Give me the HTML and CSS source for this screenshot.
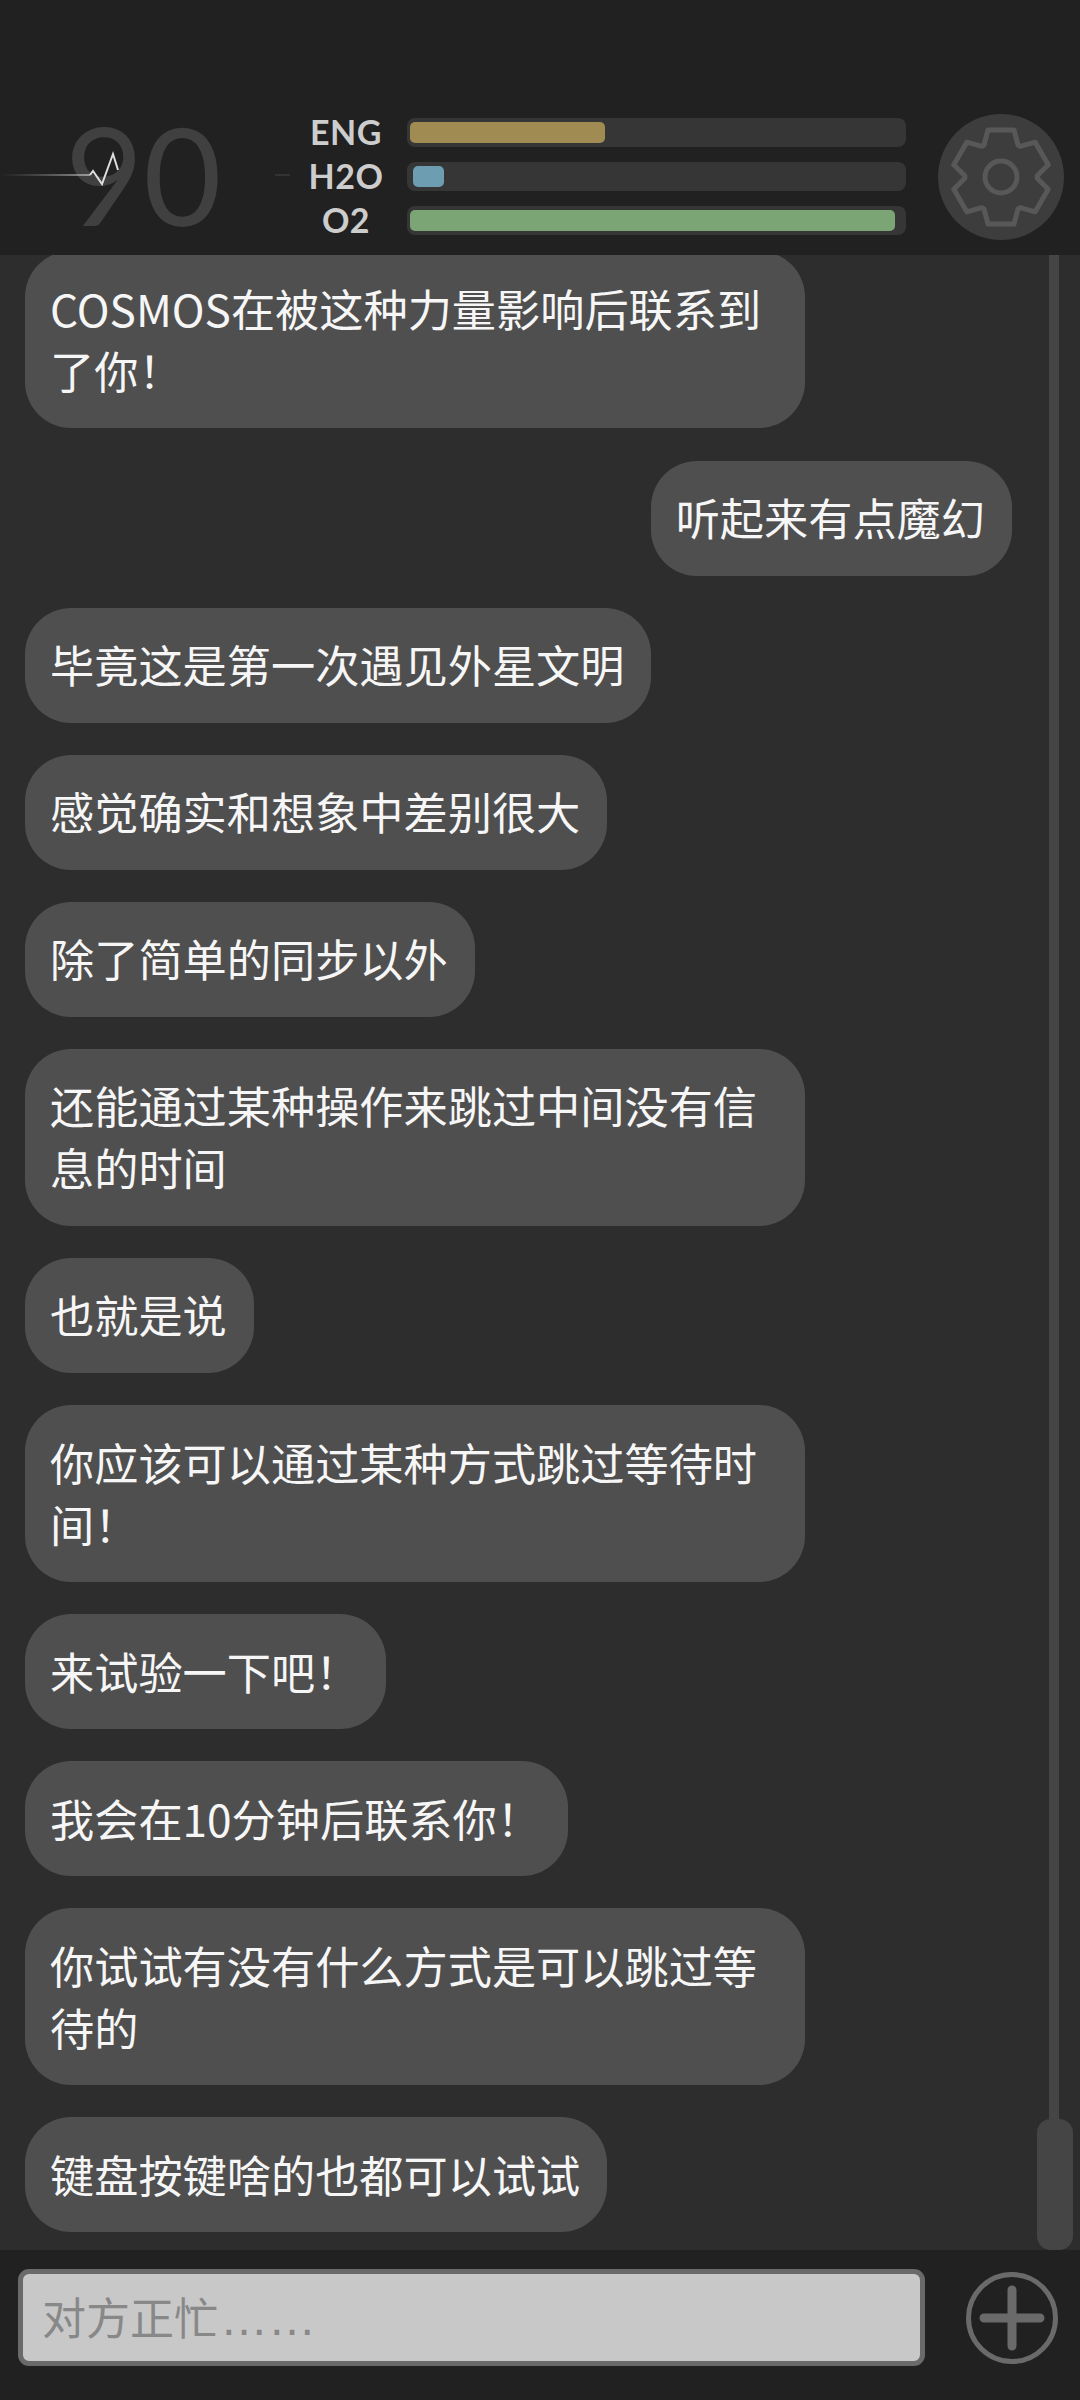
FILE: index.html
```html
<!DOCTYPE html>
<html lang="en">
<head>
    <meta charset="UTF-8">
    <meta name="viewport" content="width=device-width, initial-scale=1.0">
    <title>Chat</title>
    <link rel="stylesheet" href="styles.css">
</head>
<body>

<div class="app">
    <header class="status">
        <div class="heart">
            <span class="heart-rate">90</span>
            <!-- pulse line goes over the number -->
            <svg class="pulse" width="300" height="60" viewBox="0 0 300 60">
                <defs>
                    <linearGradient id="fade" gradientUnits="userSpaceOnUse" x1="0" y1="0" x2="92" y2="0">
                        <stop offset="0" stop-color="#888" stop-opacity="0"/>
                        <stop offset="1" stop-color="#bbb"/>
                    </linearGradient>
                </defs>
                <path d="M3 35H90" stroke="url(#fade)" stroke-width="1.5" fill="none"/>
                <path d="M90 35L93 31L102 44L113 14L118 30" stroke="#ddd" stroke-width="2" fill="none"/>
                <path d="M275 35H290" stroke="#3a3a3a" stroke-width="1.5" fill="none"/>
            </svg>
        </div>
        <div class="meters">
            <div class="meter">
                <span class="meter-label">ENG</span>
                <div class="meter-track"><div class="meter-fill eng" style="width: 39.5%"></div></div>
            </div>
            <div class="meter">
                <span class="meter-label">H2O</span>
                <div class="meter-track"><div class="meter-fill h2o" style="width: 6.3%"></div></div>
            </div>
            <div class="meter">
                <span class="meter-label">O2</span>
                <div class="meter-track"><div class="meter-fill o2" style="width: 98.4%"></div></div>
            </div>
        </div>
        <button class="settings" type="button" aria-label="Settings">
            <svg width="110" height="110" viewBox="-55 -55 110 110" fill="none" stroke="#585858" stroke-width="5" stroke-linejoin="round">
                <path d="M-17 -32L-13 -47H13L17 -32L19.2 -30.7L34.2 -34.8L47.2 -12.2L36.2 -1.3V1.3L47.2 12.2L34.2 34.8L19.2 30.7L17 32L13 47H-13L-17 32L-19.2 30.7L-34.2 34.8L-47.2 12.2L-36.2 1.3V-1.3L-47.2 -12.2L-34.2 -34.8L-19.2 -30.7Z"/>
                <circle r="16"/>
            </svg>
        </button>
    </header>

    <main class="chat">
        <div class="messages">
            <div class="bubble first">COSMOS在被这种力量影响后联系到了你！</div>
            <div class="bubble mine">听起来有点魔幻</div>
            <div class="bubble">毕竟这是第一次遇见外星文明</div>
            <div class="bubble">感觉确实和想象中差别很大</div>
            <div class="bubble">除了简单的同步以外</div>
            <div class="bubble">还能通过某种操作来跳过中间没有信息的时间</div>
            <div class="bubble">也就是说</div>
            <div class="bubble">你应该可以通过某种方式跳过等待时间！</div>
            <div class="bubble">来试验一下吧！</div>
            <div class="bubble">我会在10分钟后联系你！</div>
            <div class="bubble">你试试有没有什么方式是可以跳过等待的</div>
            <div class="bubble">键盘按键啥的也都可以试试</div>
        </div>
        <div class="scrollbar">
            <div class="scroll-track"></div>
            <div class="scroll-thumb"></div>
        </div>
    </main>

    <footer class="composer">
        <div class="input-box">对方正忙<span class="dots">……</span></div>
        <button class="add" type="button" aria-label="Add">
            <svg width="96" height="96" viewBox="0 0 96 96" fill="none" stroke="#6a6a6a">
                <circle cx="48" cy="48" r="43.5" stroke-width="5"/>
                <path d="M20 48H76M48 20V76" stroke-width="9" stroke-linecap="round"/>
            </svg>
        </button>
    </footer>
</div>

</body>
</html>
```

FILE: styles.css
```css
body {
    margin: 0;
    padding: 0;
    background-color: #212121;
    font-family: "Noto Sans CJK SC", "Noto Sans", sans-serif;
}
.app {
    width: 1080px;
    height: 2400px;
    display: flex;
    flex-direction: column;
    overflow: hidden;
}

/* top status area */
.status {
    height: 255px;
    box-sizing: border-box;
    padding-top: 114px;
    background-color: #212121;
    display: flex;
    align-items: flex-start;
}
.heart {
    position: relative;
    width: 298px;
    padding-left: 65px;
    box-sizing: border-box;
    height: 126px;
}
.heart-rate {
    display: block;
    font-family: Lato, sans-serif;
    font-weight: 400;
    font-size: 135px;
    line-height: 120px;
    color: #404040;
}
.pulse {
    position: absolute;
    left: 0;
    top: 26px;
}
.meters {
    width: 609px;
    display: flex;
    flex-direction: column;
    gap: 15px;
    padding-top: 4px;
}
.meter {
    display: flex;
    align-items: center;
    height: 29px;
}
.meter-label {
    width: 96px;
    margin: -2px 13px 0 0;
    text-align: center;
    font-family: Lato, sans-serif;
    font-weight: 700;
    font-size: 34px;
    line-height: 29px;
    letter-spacing: 0.5px;
    color: #cdcdcd;
}
.meter-track {
    width: 499px;
    height: 29px;
    box-sizing: border-box;
    padding: 4px 3px;
    background-color: #363636;
    border-radius: 8px;
}
.meter-fill {
    height: 21px;
    border-radius: 5px;
}
.meter-fill.eng {
    background-color: #a08c52;
}
.meter-fill.h2o {
    background-color: #6c9db0;
    margin-left: 3px;
}
.meter-fill.o2 {
    background-color: #7ba575;
}
.settings {
    width: 126px;
    height: 126px;
    margin-left: 31px;
    padding: 0;
    border: none;
    border-radius: 50%;
    background-color: #3d3d3d;
    display: flex;
    align-items: center;
    justify-content: center;
}

/* chat list */
.chat {
    flex: 1;
    min-height: 0;
    background-color: #2d2d2d;
    display: flex;
    overflow: hidden;
}
.messages {
    width: 1037px;
    box-sizing: border-box;
    padding-left: 25px;
    display: flex;
    flex-direction: column;
    align-items: flex-start;
    gap: 32.1px;
}
.bubble {
    max-width: 780px;
    box-sizing: border-box;
    padding: 25.5px 27px 27.5px 25px;
    background-color: #4f4f4f;
    border-radius: 46px;
    color: #f6f6f6;
    font-size: 44.2px;
    line-height: 62px;
}
.bubble.first {
    margin-top: -3.6px;
}
.bubble.mine {
    align-self: flex-end;
    margin-right: 25px;
}
.scrollbar {
    width: 36px;
    display: flex;
    flex-direction: column;
    align-items: center;
}
.scroll-track {
    flex: 1;
    width: 10px;
    margin-right: 2px;
    background-color: #454545;
}
.scroll-thumb {
    width: 36px;
    height: 131px;
    border-radius: 14px;
    background-color: #454545;
}

/* bottom input */
.composer {
    height: 150px;
    box-sizing: border-box;
    padding: 19px 0 0 18px;
    background-color: #212121;
    display: flex;
    align-items: flex-start;
}
.input-box {
    width: 907px;
    height: 97px;
    box-sizing: border-box;
    padding-left: 19px;
    border: 5px solid #6a6a6a;
    border-radius: 11px;
    background-color: #c8c8c8;
    color: #888888;
    font-size: 44px;
    line-height: 85px;
}
.dots {
    font-family: "Liberation Sans", sans-serif;
    font-size: 48px;
    margin-left: 2px;
}
.add {
    margin: 1px 0 0 39px;
    padding: 0;
    border: none;
    background: none;
    width: 96px;
    height: 96px;
}
```
